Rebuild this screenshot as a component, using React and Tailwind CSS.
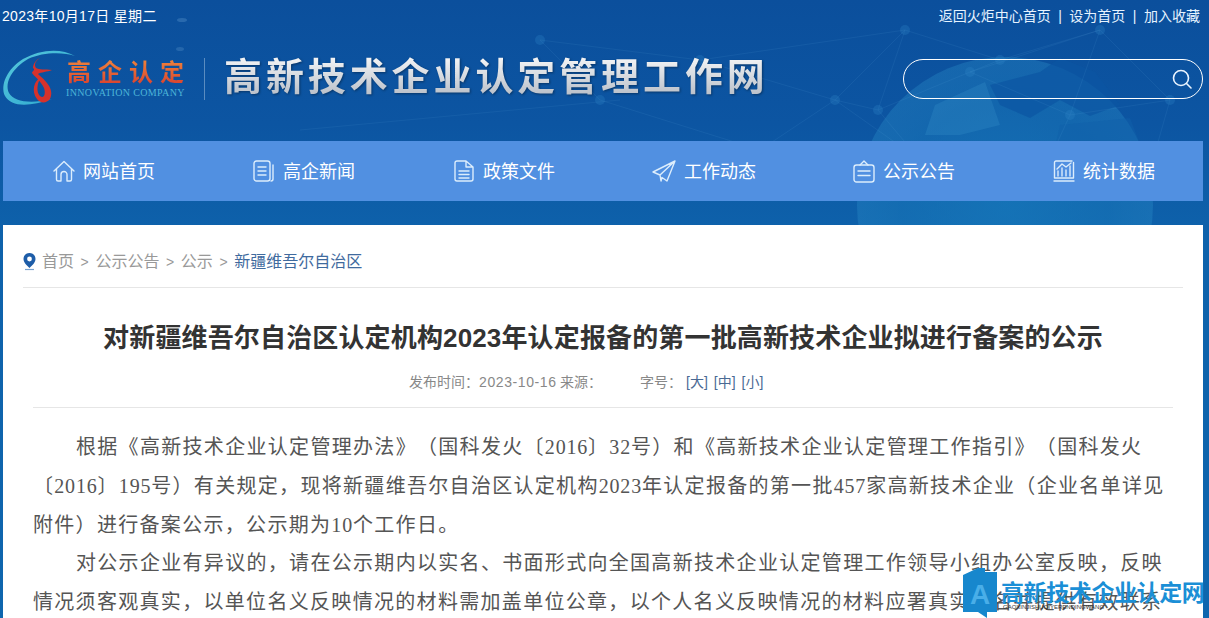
import React from "react";

const SANS = { fontFamily: '"Liberation Sans","Noto Sans CJK SC",sans-serif' };

function Backdrop() {
  const pts = [[905,30],[1000,60],[1100,30],[835,100],[878,110],[970,72],[1070,115],[1170,100],[920,160],[1040,180],[1150,170],[760,150],[700,60],[600,100],[540,40]];
  const links = [[0,1],[1,2],[0,3],[0,4],[1,5],[2,5],[2,6],[2,7],[3,4],[4,5],[5,6],[6,7],[4,8],[8,9],[9,6],[9,10],[7,10],[3,8],[11,3],[11,8],[12,3],[13,11],[12,14],[13,14],[12,0]];
  return (
    <svg className="absolute inset-0 w-full h-full" viewBox="0 0 1209 618" preserveAspectRatio="none" aria-hidden="true">
      <defs>
        <linearGradient id="bg" x1="0" y1="0" x2="0" y2="1">
          <stop offset="0" stopColor="#0b4f9c" />
          <stop offset="0.2" stopColor="#0c55a2" />
          <stop offset="0.38" stopColor="#0e62ab" />
          <stop offset="1" stopColor="#0e66ae" />
        </linearGradient>
        <radialGradient id="globe" cx="0.5" cy="0.5" r="0.5">
          <stop offset="0" stopColor="#1c86c4" stopOpacity="0.5" />
          <stop offset="0.7" stopColor="#1b7cbc" stopOpacity="0.45" />
          <stop offset="1" stopColor="#2a8dc8" stopOpacity="0.35" />
        </radialGradient>
      </defs>
      <rect width="1209" height="618" fill="url(#bg)" />
      <circle cx="1005" cy="205" r="148" fill="url(#globe)" />
      <path d="M990 85 L1040 72 L1060 58 L1095 72 L1120 105 L1090 116 L1060 100 L1030 118 L1000 105Z" fill="#0c56a3" opacity="0.7" />
      <path d="M935 105 L985 82 L1000 125 L960 135 L925 135Z" fill="#3a97cf" opacity="0.25" />
      <path d="M1060 125 L1130 118 L1150 170 L1090 200 L1050 170Z" fill="#0f5fa9" opacity="0.5" />
      <path d="M300 130 L620 100" stroke="#6fb6e4" strokeWidth="0.6" opacity="0.15" />
      {links.map(([a,b],i)=>(
        <line key={i} x1={pts[a][0]} y1={pts[a][1]} x2={pts[b][0]} y2={pts[b][1]} stroke="#6db5e6" strokeWidth="0.6" opacity="0.16" />
      ))}
      {pts.map(([x,y],i)=>(
        <circle key={i} cx={x} cy={y} r="5" fill="#2f86c8" opacity="0.3" />
      ))}
      <ellipse cx="182" cy="20" rx="5" ry="2" fill="#6ea6d6" opacity="0.3" />
      <ellipse cx="180" cy="49" rx="4" ry="2" fill="#6ea6d6" opacity="0.25" />
    </svg>
  );
}

function Logo() {
  return (
    <div className="flex items-start w-[186px] h-[60px] shrink-0">
      <svg width="62" height="60" viewBox="0 0 62 60" className="shrink-0 overflow-visible" aria-hidden="true">
        <defs>
          <linearGradient id="swirl" x1="0" y1="0" x2="1" y2="1">
            <stop offset="0" stopColor="#58c9dc" />
            <stop offset="1" stopColor="#2ba6cf" />
          </linearGradient>
        </defs>
        <path d="M72 7 C58 -1 38 0 20 10 C4 20 -3 36 2 47 C8 58 26 58 49 50 C28 55 11 53 6 44 C1 33 10 19 25 10 C40 3 60 3 72 7Z" fill="url(#swirl)" />
        <path d="M37 9 C32 12 31 16 33 19 C36 21 42 20 49 21 C44 23 38 23 35 25 C42 31 52 40 47 50 C43 55 37 54 34 50 C28 42 31 32 38 28 C34 34 33 43 37 47 C41 50 43 45 41 39 C38 32 31 27 29 24 C29 22 33 21 30 19 C30 15 33 11 37 9Z" fill="#d6322c" />
      </svg>
      <div className="flex flex-col ml-[2px] mt-[7px]">
        <span className="text-[24px] leading-[29px] font-bold tracking-[7px] whitespace-nowrap bg-gradient-to-b from-[#f08a3c] to-[#d9402f] bg-clip-text text-transparent" style={{ fontFamily: '"Noto Sans CJK SC",sans-serif' }}>高企认定</span>
        <span className="text-[10px] leading-[11px] whitespace-nowrap text-[#4cb5d8] -ml-[1px] mt-[2px] tracking-[0.35px]" style={{ fontFamily: '"Liberation Serif",serif' }}>INNOVATION COMPANY</span>
      </div>
    </div>
  );
}

const S = { fill: "none", stroke: "#dcedfc", strokeWidth: 1.4, strokeLinecap: "round", strokeLinejoin: "round" };

const icons = [
  <svg width="22" height="22" viewBox="0 0 22 22" {...S}><path d="M1 11 L11 1.500 L21 11 M3.500 9 V19.500 a1.500 1.500 0 0 0 1.500 1.500 H8 V14.500 a3 3 0 0 1 6 0 V21 H17 a1.500 1.500 0 0 0 1.500 -1.500 V9" /></svg>,
  <svg width="22" height="22" viewBox="0 0 22 22" {...S}><rect x="1" y="1" width="16" height="20" rx="2.500" /><path d="M5 7 H13 M5 11 H13 M5 15 H13 M20 5 V19 a2 2 0 0 1 -2 2" /></svg>,
  <svg width="22" height="22" viewBox="0 0 22 22" {...S}><path d="M2 3 a2 2 0 0 1 2 -2 H13 L20 7 V19 a2 2 0 0 1 -2 2 H4 a2 2 0 0 1 -2 -2Z M13 1 V7 H20 M6 11 H16 M6 14.500 H16 M6 18 H16" /></svg>,
  <svg width="24" height="22" viewBox="0 0 24 22" {...S}><path d="M23 1 L1 12 L8 15 L23 1 L15 21 L10 17.500 L9 21 L8 15" /></svg>,
  <svg width="22" height="23" viewBox="0 0 22 23" {...S}><rect x="1" y="5" width="20" height="17" rx="2.500" /><path d="M7 5 L11 1 L15 5 M5 11 H17 M5 15.500 H17" /></svg>,
  <svg width="22" height="22" viewBox="0 0 22 22" {...S}><path d="M19 1 H3 a1.500 1.500 0 0 0 -1.500 1.500 V18 H20.500 V2.500 M1 21 H21 M5 16 V11 M9 16 V8 M13 16 V10 M17 16 V6 M4 9 L9 4 L13 7 L18 3" /></svg>,
];
const navLabels = ["网站首页", "高企新闻", "政策文件", "工作动态", "公示公告", "统计数据"];

const N = ({ children }) => <span className="tracking-[0.8px]">{children}</span>;

export default function App() {
  return (
    <div className="relative h-screen w-full overflow-hidden" style={SANS}>
      <Backdrop />
      <div className="relative flex flex-col h-full">
        <div className="flex justify-between h-[33px] shrink-0 pl-[2px] pr-[9px] pt-[8px] text-[14px] leading-[16px] text-white">
          <span className="tracking-[0.3px] whitespace-pre">2023年10月17日 星期二</span>
          <span className="flex whitespace-pre text-[#e6f3ff]">返回火炬中心首页<span className="mx-[7.500px]">|</span>设为首页<span className="mx-[7.500px]">|</span>加入收藏</span>
        </div>
        <div className="flex items-center h-[108px] shrink-0 pb-[16px] pl-[3px] pr-[6px]">
          <Logo />
          <div className="w-px h-[42px] bg-[#5a8cc0] ml-[15px] mr-[19px]" />
          <h2 className="mb-[10px] text-[38px] leading-[48px] font-bold tracking-[3.900px] whitespace-nowrap bg-gradient-to-b from-white to-[#b5bcc6] bg-clip-text text-transparent drop-shadow-[1px_1px_1px_rgba(0,0,0,0.35)]" style={{ fontFamily: '"Noto Sans CJK SC",sans-serif' }}>高新技术企业认定管理工作网</h2>
          <div className="ml-auto w-[300px] h-[40px] rounded-full border border-white flex items-center justify-end pr-[9px]">
            <svg width="22" height="22" viewBox="0 0 22 22" fill="none" stroke="#eaf4ff" strokeWidth="1.600" strokeLinecap="round"><circle cx="10" cy="10" r="7.500" /><path d="M15.500 15.500 L20 20" /></svg>
          </div>
        </div>
        <nav className="flex h-[60px] shrink-0 ml-[3px] mr-[6px] bg-[#5190e1]">
          {navLabels.map((n, i) => (
            <div key={n} className="flex-1 flex items-center justify-center gap-[8px] pl-[2px] text-[18px] text-white" >
              {icons[i]}
              <span className="whitespace-nowrap mt-[2px]">{n}</span>
            </div>
          ))}
        </nav>
        <main className="mt-[24px] ml-[3px] mr-[6px] flex-1 bg-white">
          <div className="mx-[20px] h-[63px] pt-[12px] flex items-center gap-[6px] border-b border-[#e6e6e6] text-[16px] text-[#999]">
            <svg width="13" height="18" viewBox="0 0 13 18" aria-hidden="true"><path d="M6.500 0 C2.900 0 0.500 2.700 0.500 6 C0.500 9.500 4 12.500 6.500 15 C9 12.500 12.500 9.500 12.500 6 C12.500 2.700 10.100 0 6.500 0Z M6.500 3.600 a2.400 2.400 0 1 1 0 4.800 a2.400 2.400 0 1 1 0 -4.800Z" fill="#1e5da8" fillRule="evenodd" /><path d="M2 16.500 H11" stroke="#7aa3d0" strokeWidth="1.200" /></svg>
            <span className="flex gap-[6.600px] whitespace-nowrap">
              <span>首页</span><span className="text-[14px] leading-[24px]">&gt;</span>
              <span>公示公告</span><span className="text-[14px] leading-[24px]">&gt;</span>
              <span>公示</span><span className="text-[14px] leading-[24px]">&gt;</span>
              <span className="text-[#3f6a9e]">新疆维吾尔自治区</span>
            </span>
          </div>
          <div className="mx-[30px]">
            <h1 className="text-[26px] leading-[36px] font-bold tracking-[0.15px] text-[#333] text-center mt-[32px] whitespace-nowrap">对新疆维吾尔自治区认定机构2023年认定报备的第一批高新技术企业拟进行备案的公示</h1>
            <div className="flex h-[50px] mt-[2px] items-center pl-[376px] border-b border-[#e6e6e6] text-[14px] text-[#888] whitespace-nowrap">
              <span className="w-[70px]">发布时间：</span>
              <span className="w-[81px] tracking-[0.6px]">2023-10-16</span>
              <span className="w-[80px]">来源：</span>
              <span className="w-[46px]">字号：</span>
              <span className="flex gap-[6px] text-[#4a6a94]"><span>[大]</span><span>[中]</span><span>[小]</span></span>
            </div>
            <div className="pt-[20px] text-[20px] leading-[38.800px] tracking-[1.310px] text-[#555] [text-spacing-trim:space-all]" style={{ fontFamily: '"Liberation Serif","Noto Sans CJK SC",serif' }}>
              <p className="indent-[43px]">根据《高新技术企业认定管理办法》（国科发火〔<N>2016</N>〕<N>32</N>号）和《高新技术企业认定管理工作指引》（国科发火〔<N>2016</N>〕<N>195</N>号）有关规定，现将新疆维吾尔自治区认定机构<N>2023</N>年认定报备的第一批<N>457</N>家高新技术企业（企业名单详见附件）进行备案公示，公示期为<N>10</N>个工作日。</p>
              <p className="indent-[43px]">对公示企业有异议的，请在公示期内以实名、书面形式向全国高新技术企业认定管理工作领导小组办公室反映，反映情况须客观真实，以单位名义反映情况的材料需加盖单位公章，以个人名义反映情况的材料应署真实姓名并提供有效联系方式。</p>
            </div>
          </div>
        </main>
      </div>
      <div className="absolute left-[963px] top-[568px] w-[246px] h-[50px]">
        <svg width="34" height="50" viewBox="0 0 34 50" className="absolute left-0 top-0" aria-hidden="true"><path d="M0 7 L15 0 L22 0 V4 H34 V44 H24 V50 L15 44 H0Z" fill="#1787cd" /></svg>
        <span className="absolute left-[7px] top-[12px] text-[28px] leading-[30px] font-bold text-[#49aee8]">A</span>
        <span className="absolute left-[38px] top-[11px] text-[23px] leading-[24px] font-bold text-[#1b8fd6] whitespace-nowrap tracking-[-0.4px]" style={{ fontFamily: '"Noto Sans CJK SC",sans-serif' }}>高新技术企业认定网</span>
        <span className="absolute left-[40px] top-[35px] text-[6px] leading-[8px] text-[#333] whitespace-nowrap">GAOXINJISHUQIYERENDINGWANG</span>
      </div>
    </div>
  );
}
